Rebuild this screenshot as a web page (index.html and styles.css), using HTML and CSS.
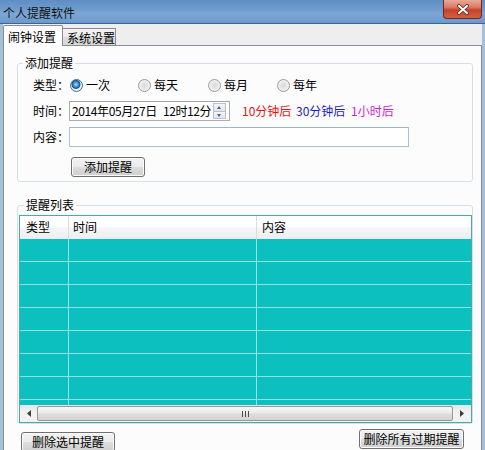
FILE: index.html
```html
<!DOCTYPE html>
<html lang="zh-CN">
<head>
<meta charset="utf-8">
<title>个人提醒软件</title>
<link rel="stylesheet" href="styles.css">
</head>
<body>
<div class="window">
  <div class="titlebar">
    <span class="title">个人提醒软件</span>
    <div class="close">
      <svg width="14" height="11" viewBox="0 0 14 11"><path d="M3 2 L11 9 M11 2 L3 9" stroke="#5a1d14" stroke-width="3.6" stroke-linecap="round"/><path d="M3 2 L11 9 M11 2 L3 9" stroke="#ffffff" stroke-width="2.2" stroke-linecap="round"/></svg>
    </div>
  </div>
  <div class="frame">
    <div class="tabs">
      <div class="tab active">闹钟设置</div>
      <div class="tab inactive">系统设置</div>
    </div>
    <div class="page">
      <fieldset class="group add-group">
        <legend>添加提醒</legend>
        <div class="row">
          <span class="label">类型：</span>
          <label class="radio r1"><span class="dot checked"></span>一次</label>
          <label class="radio r2"><span class="dot"></span>每天</label>
          <label class="radio r3"><span class="dot"></span>每月</label>
          <label class="radio r4"><span class="dot"></span>每年</label>
        </div>
        <div class="row">
          <span class="label">时间：</span>
          <div class="datebox">
            <span class="date-text">2014年05月27日<span class="gap">12时12分</span></span>
            <div class="spin"><span class="spin-btn up"></span><span class="spin-btn down"></span></div>
          </div>
          <span class="quick red">10分钟后</span>
          <span class="quick blue">30分钟后</span>
          <span class="quick magenta">1小时后</span>
        </div>
        <div class="row">
          <span class="label">内容：</span>
          <div class="textbox"></div>
        </div>
        <div class="row btn-row">
          <button class="btn add-btn">添加提醒</button>
        </div>
      </fieldset>
      <fieldset class="group list-group">
        <legend>提醒列表</legend>
        <div class="listview">
          <div class="lv-head">
            <div class="cell c1">类型</div>
            <div class="cell c2">时间</div>
            <div class="cell c3">内容</div>
          </div>
          <div class="lv-body">
            <div class="lv-row"><div class="cell c1"></div><div class="cell c2"></div><div class="cell c3"></div></div>
            <div class="lv-row"><div class="cell c1"></div><div class="cell c2"></div><div class="cell c3"></div></div>
            <div class="lv-row"><div class="cell c1"></div><div class="cell c2"></div><div class="cell c3"></div></div>
            <div class="lv-row"><div class="cell c1"></div><div class="cell c2"></div><div class="cell c3"></div></div>
            <div class="lv-row"><div class="cell c1"></div><div class="cell c2"></div><div class="cell c3"></div></div>
            <div class="lv-row"><div class="cell c1"></div><div class="cell c2"></div><div class="cell c3"></div></div>
            <div class="lv-row"><div class="cell c1"></div><div class="cell c2"></div><div class="cell c3"></div></div>
            <div class="lv-row"><div class="cell c1"></div><div class="cell c2"></div><div class="cell c3"></div></div>
          </div>
          <div class="hscroll">
            <div class="arrow left"><svg width="4" height="7" viewBox="0 0 4 7"><path d="M4 0 L0 3.5 L4 7 Z" fill="#3c3c3c"/></svg></div>
            <div class="thumb"><svg width="7" height="6" viewBox="0 0 7 6"><path d="M0.5 0 V6 M3.5 0 V6 M6.5 0 V6" stroke="#4a4a4a" stroke-width="1"/></svg></div>
            <div class="arrow right"><svg width="4" height="7" viewBox="0 0 4 7"><path d="M0 0 L4 3.5 L0 7 Z" fill="#3c3c3c"/></svg></div>
          </div>
        </div>
      </fieldset>
      <div class="bottom-bar">
        <button class="btn del-sel">删除选中提醒</button>
        <button class="btn del-all">删除所有过期提醒</button>
      </div>
    </div>
  </div>
</div>
</body>
</html>
```
FILE: styles.css
```css
* { box-sizing: border-box; }
html, body { margin: 0; padding: 0; }
body {
  width: 485px;
  height: 450px;
  overflow: hidden;
  font-family: "Noto Sans CJK SC", "Noto Sans", sans-serif;
  font-size: 12px;
  color: #000;
  background: #f0f0f0;
}
.window {
  width: 485px;
  height: 450px;
  display: flex;
  flex-direction: column;
  overflow: hidden;
}
.titlebar {
  flex: none;
  height: 24px;
  display: flex;
  justify-content: space-between;
  align-items: flex-start;
  background: linear-gradient(180deg, #5d8ec4 0%, #6f9ccd 40%, #7ca7d5 60%, #6c99cb 100%);
  border-bottom: 1px solid #3b6593;
}
.title {
  margin-top: 5px;
  padding-left: 3px;
  line-height: 15px;
  color: #111;
}
.close {
  width: 39px;
  height: 19px;
  margin-right: 3px;
  border: 1px solid #6b2a20;
  border-top: none;
  border-radius: 0 0 4px 4px;
  background: linear-gradient(180deg, #e9a899 0%, #dc7a66 40%, #c7422b 55%, #d25f43 100%);
  display: flex;
  align-items: center;
  justify-content: center;
}
.frame {
  flex: 1;
  min-height: 0;
  display: flex;
  flex-direction: column;
  border-left: 3px solid #a4bfdc;
  border-right: 3px solid #a4bfdc;
  background: #eeeeee;
}
.tabs {
  flex: none;
  height: 21px;
  display: flex;
  align-items: flex-end;
}
.tab {
  border: 1px solid #898c95;
  border-bottom: none;
  padding-left: 4px;
  line-height: 15px;
}
.tab.active {
  position: relative;
  z-index: 1;
  width: 60px;
  height: 21px;
  margin-bottom: -1px;
  padding-top: 3px;
  background: #ffffff;
  border-radius: 2px 2px 0 0;
}
.tab.inactive {
  width: 54px;
  height: 17px;
  margin-left: -1px;
  padding-top: 1px;
  background: linear-gradient(180deg, #f3f3f3 0%, #ebebeb 50%, #dddddd 51%, #d6d6d6 100%);
}
.page {
  flex: 1;
  min-height: 0;
  display: flex;
  flex-direction: column;
  background: #fcfcfc;
  border: 1px solid #898c95;
  border-bottom: none;
}
.group {
  margin: 10px 8px 0 13px;
  padding: 0;
  border: 1px solid #d5dfe5;
  border-radius: 3px;
  min-width: 0;
}
.group legend {
  margin-left: 5px;
  padding: 0 2px;
  line-height: 14px;
}
.add-group {
  padding: 5px 0 4px 0;
}
.row {
  height: 20px;
  margin-left: 15px;
  display: flex;
  align-items: center;
}
.row + .row { margin-top: 6px; }
.row.btn-row { margin-top: 10px; }
.label {
  width: 36px;
  flex: none;
  line-height: 14px;
  white-space: nowrap;
}
.radio {
  flex: none;
  display: flex;
  align-items: center;
  line-height: 14px;
}
.radio.r1 { width: 68px; margin-left: 1px; }
.radio.r2 { width: 70px; }
.radio.r3 { width: 69px; }
.dot {
  flex: none;
  width: 13px;
  height: 13px;
  margin-right: 3px;
  border-radius: 50%;
  border: 1px solid #9a9a9a;
  background: radial-gradient(circle at 50% 50%, #d9d9d9 0, #e6e6e6 40%, #f4f4f4 75%, #ffffff 100%);
}
.dot.checked {
  border-color: #3f6b98;
  background: radial-gradient(circle at 45% 40%, #a4e2fb 0, #3c8ed3 28%, #1c4f8c 45%, #e9eef3 55%, #f7f7f7 100%);
}
.datebox {
  width: 161px;
  height: 20px;
  flex: none;
  display: flex;
  align-items: center;
  border: 1px solid #abadb3;
  border-top-color: #a0a3a8;
  background: #fff;
  padding-left: 2px;
}
.date-text {
  flex: 1;
  line-height: 14px;
  white-space: nowrap;
  letter-spacing: -0.4px;
}
.gap { margin-left: 6px; }
.spin {
  flex: none;
  width: 13px;
  height: 16px;
  margin-right: 3px;
  display: flex;
  flex-direction: column;
}
.spin-btn {
  flex: 1;
  border: 1px solid #b8c1cc;
  background: linear-gradient(180deg, #f4f6f8, #dfe5ec);
  position: relative;
}
.spin-btn.down { border-top: none; }
.spin-btn.up::after,
.spin-btn.down::after {
  content: "";
  position: absolute;
  left: 3px;
  width: 0;
  height: 0;
  border-left: 2.5px solid transparent;
  border-right: 2.5px solid transparent;
}
.spin-btn.up::after { top: 2px; border-bottom: 3px solid #4d6185; }
.spin-btn.down::after { top: 2px; border-top: 3px solid #4d6185; }
.quick {
  flex: none;
  line-height: 14px;
  white-space: nowrap;
}
.quick.red { color: #e41414; margin-left: 12px; width: 54px; }
.quick.blue { color: #1c1cc4; width: 55px; }
.quick.magenta { color: #d21cd2; }
.textbox {
  flex: none;
  width: 340px;
  height: 20px;
  border: 1px solid #abc1d8;
  border-top-color: #9fb6cf;
  background: #fff;
}
.btn {
  font-family: inherit;
  font-size: 12px;
  color: #000;
  height: 20px;
  padding: 0;
  line-height: 16px;
  border: 1px solid #707070;
  border-radius: 3px;
  background: linear-gradient(180deg, #f2f2f2 0%, #ebebeb 50%, #dddddd 51%, #cfcfcf 100%);
  box-shadow: inset 0 0 0 1px #fbfbfb;
}
.add-btn {
  width: 74px;
  margin-left: 38px;
}
.list-group {
  margin-top: 16px;
  padding: 3px 0 0 1px;
}
.listview {
  height: 208px;
  display: flex;
  flex-direction: column;
  border: 1px solid #4aa9a9;
  background: #0cc0bf;
}
.lv-head {
  flex: none;
  height: 23px;
  display: flex;
  background: linear-gradient(180deg, #ffffff 0%, #ffffff 45%, #f3f4f5 55%, #eceeef 100%);
}
.lv-head .cell {
  line-height: 22px;
  border-right: 1px solid #dadcdf;
}
.cell.c1 { width: 49px; padding-left: 6px; }
.cell.c2 { width: 188px; padding-left: 4px; }
.cell.c3 { flex: 1; padding-left: 5px; }
.lv-head .cell.c3 { border-right: none; }
.lv-body {
  flex: 1;
  min-height: 0;
  overflow: hidden;
}
.lv-row {
  height: 23px;
  display: flex;
  border-bottom: 1px solid #8fe1df;
}
.lv-row .cell {
  border-right: 1px solid #93e3e1;
}
.lv-row .cell.c3 { border-right: none; }
.hscroll {
  flex: none;
  height: 17px;
  display: flex;
  background: linear-gradient(180deg, #e4e4e4 0%, #f2f2f2 40%, #f2f2f2 100%);
}
.arrow {
  display: flex;
  align-items: center;
  justify-content: center;
}
.arrow.left { width: 17px; }
.arrow.right { width: 18px; }
.thumb {
  flex: 1;
  margin: 1px 0;
  border: 1px solid #979797;
  border-radius: 2px;
  background: linear-gradient(180deg, #f6f6f6 0%, #ececec 45%, #dcdcdc 55%, #d3d3d3 100%);
  display: flex;
  align-items: center;
  justify-content: center;
}
.bottom-bar {
  display: flex;
  justify-content: space-between;
  align-items: flex-start;
  padding: 0 17px;
}
.del-sel {
  width: 94px;
  margin-top: 8px;
}
.del-all {
  width: 105px;
  margin-top: 5px;
}
```
